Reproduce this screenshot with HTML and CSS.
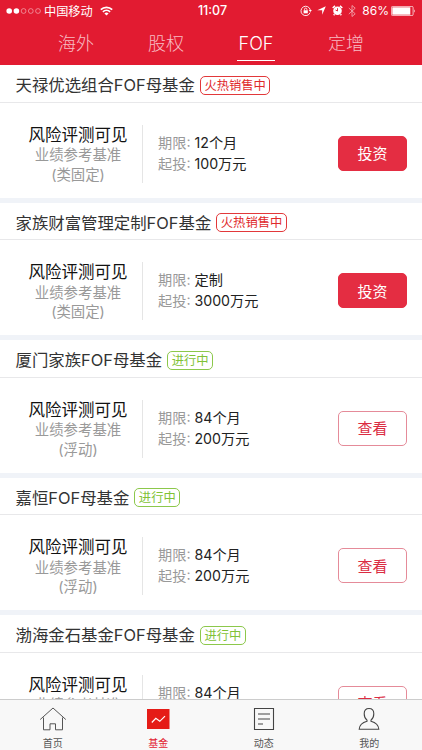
FILE: index.html
```html
<!DOCTYPE html>
<html lang="zh-CN">
<head>
    <meta charset="UTF-8">
    <meta name="viewport" content="width=device-width, initial-scale=1.0">
    <title>基金</title>
    <link rel="stylesheet" href="styles.css">
</head>
<body>
    <header class="header">
        <div class="status-bar">
            <div class="status-left">
                <svg class="signal" width="35" height="8" viewBox="0 0 35 8">
                    <g fill="#fff"><circle cx="3.2" cy="4" r="2.8"/><circle cx="10.4" cy="4" r="2.8"/></g>
                    <g fill="none" stroke="#fff" stroke-width=".6" opacity=".75"><circle cx="17.6" cy="4" r="2.4"/><circle cx="24.8" cy="4" r="2.4"/><circle cx="32" cy="4" r="2.4"/></g>
                </svg>
                <span class="carrier">中国移动</span>
                <svg class="wifi" width="13" height="10" viewBox="0 0 13 10" fill="none" stroke="#fff" stroke-width="1.7">
                    <path d="M.8 3.6a8.2 8.2 0 0 1 11.4 0M2.9 5.9a5.2 5.2 0 0 1 7.2 0"/>
                    <path d="M6.5 9.6 4.4 7.5a3 3 0 0 1 4.2 0z" fill="#fff" stroke="none"/>
                </svg>
            </div>
            <span class="time">11:07</span>
            <div class="status-right">
                <svg width="12" height="12" viewBox="0 0 12 12" fill="none" stroke="#fff">
                    <path d="M10.1 7.6A4.7 4.7 0 1 1 10.3 5" stroke-width=".9"/>
                    <path d="M8.7 5h3.2l-1.6 2z" fill="#fff" stroke="none"/>
                    <path d="M3.6 5.3h4.2v3H3.6z" fill="#fff" stroke="none"/>
                    <path d="M4.5 5.5V4.3a1.2 1.2 0 0 1 2.4 0v1.2" stroke-width=".8"/>
                </svg>
                <svg class="location" width="9" height="9" viewBox="0 0 9 9"><path d="M8.8.2 5.2 8.8V4.2H.3z" fill="#fff"/></svg>
                <svg class="alarm" width="11" height="11" viewBox="0 0 11 11" fill="none">
                    <circle cx="5.5" cy="5.8" r="4.3" fill="#fff"/>
                    <path d="M.7 3 3 .9M8 .9 10.3 3M2.5 9.2l-.8 1M8.5 9.2l.8 1" stroke="#fff" stroke-width="1.5"/>
                    <path d="M5.5 3.2v2.8l-2-1" stroke="#e21b31" stroke-width=".9"/>
                </svg>
                <svg class="bluetooth" width="8" height="12" viewBox="0 0 8 12"><path d="m.8 3 6.4 5.8L4 11.5V.5l3.2 2.7L.8 9" fill="none" stroke="#fff" stroke-width=".9"/></svg>
                <span class="percent">86%</span>
                <svg class="battery" width="25" height="10" viewBox="0 0 25 10">
                    <rect x=".4" y=".4" width="21.7" height="9.2" rx="1.2" fill="none" stroke="#fff" stroke-width=".7"/>
                    <rect x="1.3" y="1.3" width="18" height="7.4" fill="#fff"/>
                    <path d="M23.2 3.3q1.5 1.7 0 3.4z" fill="#fff"/>
                </svg>
            </div>
        </div>
        <nav class="tabs">
            <a class="tab">海外</a>
            <a class="tab">股权</a>
            <a class="tab active">FOF</a>
            <a class="tab">定增</a>
        </nav>
    </header>

    <main class="fund-list">
        <section class="fund">
            <div class="fund-title"><h2>天禄优选组合FOF母基金</h2><span class="tag hot">火热销售中</span></div>
            <div class="fund-body">
                <div class="yield"><strong>风险评测可见</strong><span>业绩参考基准</span><span>(类固定)</span></div>
                <div class="info">
                    <p>期限: <b>12个月</b></p>
                    <p>起投: <b>100万元</b></p>
                </div>
                <button class="btn primary">投资</button>
            </div>
        </section>
        <section class="fund">
            <div class="fund-title"><h2>家族财富管理定制FOF基金</h2><span class="tag hot">火热销售中</span></div>
            <div class="fund-body">
                <div class="yield"><strong>风险评测可见</strong><span>业绩参考基准</span><span>(类固定)</span></div>
                <div class="info">
                    <p>期限: <b>定制</b></p>
                    <p>起投: <b>3000万元</b></p>
                </div>
                <button class="btn primary">投资</button>
            </div>
        </section>
        <section class="fund">
            <div class="fund-title"><h2>厦门家族FOF母基金</h2><span class="tag">进行中</span></div>
            <div class="fund-body">
                <div class="yield"><strong>风险评测可见</strong><span>业绩参考基准</span><span>(浮动)</span></div>
                <div class="info">
                    <p>期限: <b>84个月</b></p>
                    <p>起投: <b>200万元</b></p>
                </div>
                <button class="btn">查看</button>
            </div>
        </section>
        <section class="fund">
            <div class="fund-title"><h2>嘉恒FOF母基金</h2><span class="tag">进行中</span></div>
            <div class="fund-body">
                <div class="yield"><strong>风险评测可见</strong><span>业绩参考基准</span><span>(浮动)</span></div>
                <div class="info">
                    <p>期限: <b>84个月</b></p>
                    <p>起投: <b>200万元</b></p>
                </div>
                <button class="btn">查看</button>
            </div>
        </section>
        <section class="fund">
            <div class="fund-title"><h2>渤海金石基金FOF母基金</h2><span class="tag">进行中</span></div>
            <div class="fund-body">
                <div class="yield"><strong>风险评测可见</strong><span>业绩参考基准</span></div>
                <div class="info">
                    <p>期限: <b>84个月</b></p>
                </div>
                <button class="btn">查看</button>
            </div>
        </section>
    </main>

    <nav class="tabbar">
        <a class="tabbar-item">
            <svg width="28" height="24" viewBox="0 0 28 24" fill="none" stroke="#555" stroke-width="1">
                <path d="M1.2 12.5 14 1l12.8 11.5M4.5 10.5v12.3H11v-6h5.5v6h7V10.5"/>
            </svg>
            <span>首页</span>
        </a>
        <a class="tabbar-item active">
            <svg width="28" height="24" viewBox="0 0 28 24" fill="none">
                <path d="M3 2h22.5v20H3z" fill="#e51c17"/>
                <path d="m7.8 15.5 4-4.2 4 3L21 9.1" stroke="#fff" stroke-width="1.2"/>
            </svg>
            <span>基金</span>
        </a>
        <a class="tabbar-item">
            <svg width="28" height="24" viewBox="0 0 28 24" fill="none" stroke="#444" stroke-width="1.1">
                <path d="M4.5 1.5h19v21h-19zM8 7h12M8 12h12M8 17h5"/>
            </svg>
            <span>动态</span>
        </a>
        <a class="tabbar-item">
            <svg width="28" height="24" viewBox="0 0 28 24" fill="none" stroke="#444" stroke-width="1.1">
                <path d="M14 1.5c-3 0-4.8 2.2-4.8 5.2 0 2.7 1 5 2.8 6.4v1.2c-4.5 1.2-7.5 3.2-7.8 8h19.6c-.3-4.8-3.3-6.8-7.8-8v-1.2c1.8-1.4 2.8-3.7 2.8-6.4 0-3-1.8-5.2-4.8-5.2z"/>
            </svg>
            <span>我的</span>
        </a>
    </nav>
</body>
</html>
```

FILE: styles.css
```css
* {
    box-sizing: border-box;
}
body {
    margin: 0;
    height: 750px;
    display: flex;
    flex-direction: column;
    overflow: hidden;
    background-color: #fff;
    color: #333;
    font-family: Inter, "Noto Sans CJK SC", sans-serif;
}
.header {
    flex: none;
    height: 65px;
    background-color: #e21b31;
    color: #fff;
}
.status-bar {
    display: grid;
    grid-template-columns: 1fr auto 1fr;
    align-items: center;
    height: 21px;
    padding: 0 6px;
    font-size: 12.2px;
}
.status-left, .status-right {
    display: flex;
    align-items: center;
}
.status-right {
    justify-content: flex-end;
}
.carrier {
    margin: 0 7px 0 3px;
}
.time {
    padding-left: 3px;
    font-size: 12.5px;
    font-weight: 500;
}
.location {
    margin-left: 5px;
}
.alarm {
    margin-left: 6px;
}
.bluetooth {
    margin: 0 6px 0 5px;
    opacity: 0.6;
}
.percent {
    font-size: 12px;
}
.battery {
    margin-left: 2px;
}
.tabs {
    display: grid;
    grid-template-columns: repeat(4, 90px);
    justify-content: center;
    justify-items: center;
    height: 44px;
}
.tab {
    height: 40px;
    font-size: 18px;
    font-weight: 300;
    line-height: 45px;
    color: #f8bcc3;
}
.tab.active {
    width: 38px;
    text-align: center;
    color: #fff;
    border-bottom: 1px solid #fff;
}
.fund-list {
    flex: 1;
    min-height: 0;
    overflow: hidden;
}
.fund {
    height: 137.5px;
    border-bottom: 5px solid #f0f3f8;
}
.fund-title {
    display: flex;
    align-items: center;
    height: 37.5px;
    padding: 4px 15.5px 0;
    border-bottom: 1px solid #e8e8ea;
}
.fund-title h2 {
    margin: 0;
    font-size: 16.4px;
    font-weight: 400;
    line-height: 24px;
    white-space: nowrap;
}
.tag {
    height: 19px;
    margin-left: 5px;
    padding: 0 3.5px;
    border: 1px solid #8cc84b;
    border-radius: 5px;
    font-size: 12.3px;
    line-height: 17px;
    white-space: nowrap;
    color: #7fc236;
}
.tag.hot {
    border-color: #e2383a;
    color: #df2a2c;
}
.fund-body {
    display: flex;
    align-items: flex-start;
    padding: 22px 15px 0 15px;
}
.yield {
    display: flex;
    flex-direction: column;
    align-items: center;
    width: 128px;
    height: 58px;
    padding-right: 1px;
    border-right: 1px solid #e5e5e5;
    font-size: 14.4px;
    line-height: 19.5px;
    color: #999;
}
.yield strong {
    font-size: 16.5px;
    font-weight: 400;
    line-height: 20.5px;
    color: #111;
}
.info {
    padding: 7px 0 0 15px;
    font-size: 14.2px;
    line-height: 21px;
    color: #999;
}
.info p {
    margin: 0;
}
.info b {
    font-weight: 400;
    color: #222;
}
.btn {
    width: 69px;
    height: 35px;
    margin: 11px 0 0 auto;
    padding: 0 0 1px;
    border: 1px solid #e58b99;
    border-radius: 5px;
    background-color: #fff;
    font-family: inherit;
    font-size: 15px;
    color: #db2c42;
}
.btn.primary {
    border-color: #e42d42;
    background-color: #e42d42;
    color: #fff;
}
.tabbar {
    flex: none;
    display: grid;
    grid-template-columns: repeat(4, 1fr);
    height: 51px;
    border-top: 1px solid #ccc;
    background-color: #f8f8f8;
}
.tabbar-item {
    display: flex;
    flex-direction: column;
    align-items: center;
    padding-top: 7px;
    font-size: 10px;
    line-height: 14px;
    color: #555;
}
.tabbar-item span {
    margin-top: 5px;
}
.tabbar-item.active {
    color: #e21b31;
}
```
